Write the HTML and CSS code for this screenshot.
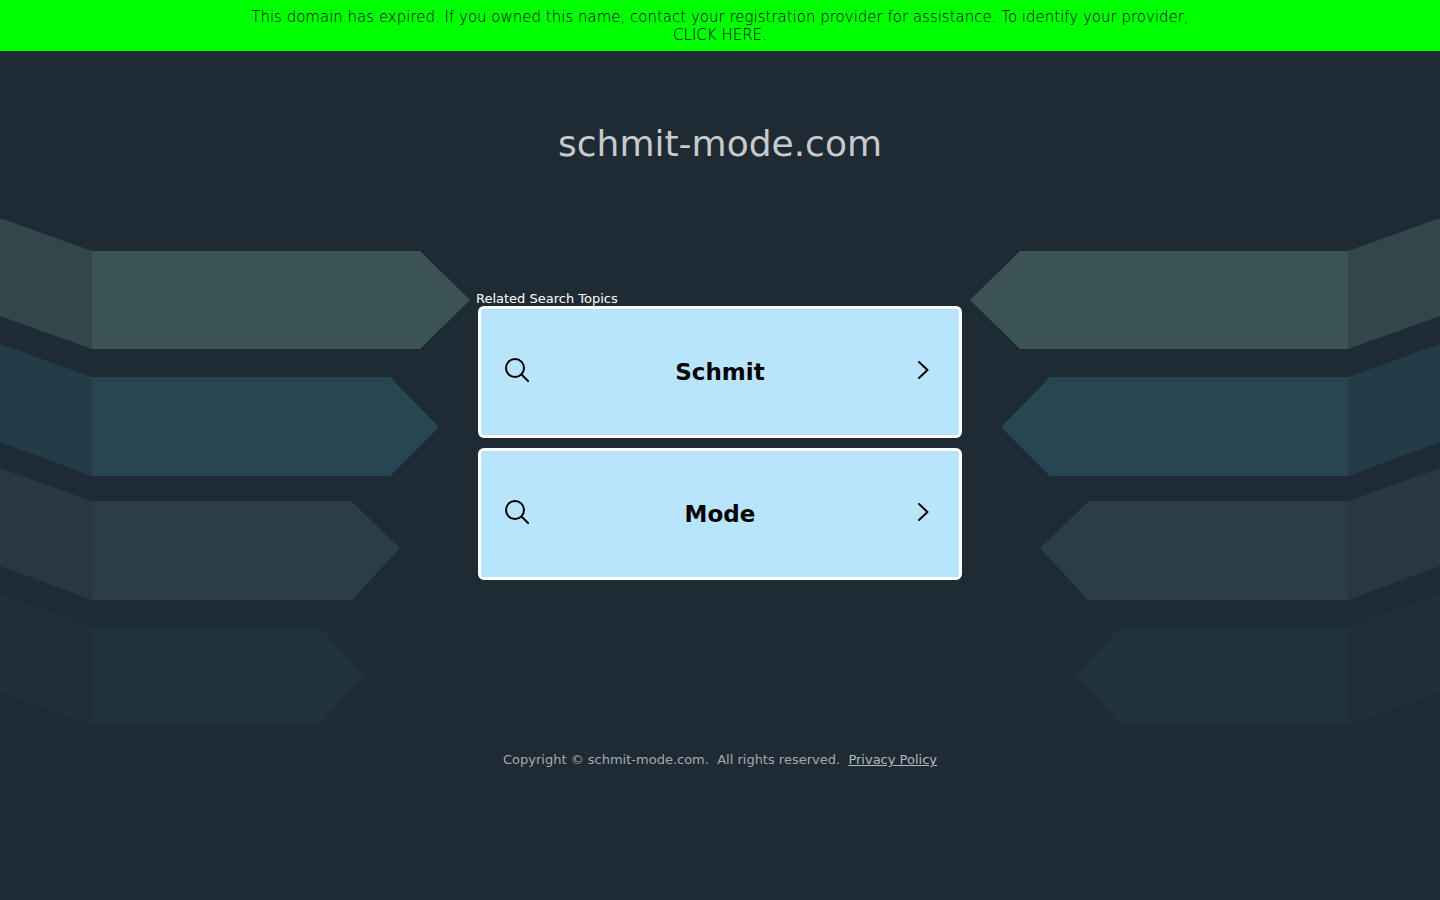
FILE: index.html
```html
<!DOCTYPE html>
<html lang="en">
<head>
  <meta charset="UTF-8">
  <meta name="viewport" content="width=device-width, initial-scale=1.0">
  <title>schmit-mode.com</title>
  <link rel="stylesheet" href="styles.css">
</head>
<body>
  <div class="banner">
    <p>This domain has expired. If you owned this name, contact your registration provider for assistance. To identify your provider, <a href="#">CLICK HERE.</a></p>
  </div>
  <main class="page">
    <svg class="arrows" viewBox="0 0 1440 520" aria-hidden="true">
      <defs>
        <g id="side">
          <path fill="#32464c" d="M0 1l92 33v98L0 99z"/>
          <path fill="#3c5356" d="M92 34h328l50 49-50 49H92z"/>
          <path fill="#243c48" d="M0 127l92 33v99L0 225z"/>
          <path fill="#284552" d="M92 160h298l49 50-49 49H92z"/>
          <path fill="#273840" d="M0 251l92 33v99L0 349z"/>
          <path fill="#2c3e45" d="M92 284h259l49 47-48 52H92z"/>
          <path fill="#1e2e3b" d="M0 377l92 33v98L0 475z"/>
          <path fill="#20323d" d="M92 410h227l46 48-46 50H92z"/>
        </g>
      </defs>
      <use href="#side"/>
      <use href="#side" transform="matrix(-1 0 0 1 1440 0)"/>
    </svg>
    <h1>schmit-mode.com</h1>
    <section class="topics">
      <h2>Related Search Topics</h2>
      <a class="topic" href="#">
        <svg class="icon" viewBox="0 0 24 24"><circle cx="10" cy="10" r="9"/><path d="M16.500 16.500l6.500 6.500"/></svg>
        <span>Schmit</span>
        <svg class="icon" viewBox="0 0 24 24"><path d="M8 4l8.500 8-8.500 8"/></svg>
      </a>
      <a class="topic" href="#">
        <svg class="icon" viewBox="0 0 24 24"><circle cx="10" cy="10" r="9"/><path d="M16.500 16.500l6.500 6.500"/></svg>
        <span>Mode</span>
        <svg class="icon" viewBox="0 0 24 24"><path d="M8 4l8.500 8-8.500 8"/></svg>
      </a>
    </section>
  </main>
  <footer>
    Copyright © schmit-mode.com.&nbsp; All rights reserved.&nbsp; <a href="#">Privacy Policy</a>
  </footer>
</body>
</html>
```
FILE: styles.css
```css
* {
  box-sizing: border-box;
}
body {
  margin: 0;
  min-height: 100vh;
  background: #1f2b34;
  font-family: "DejaVu Sans", sans-serif;
  color: #fff;
}
h1, h2, p {
  margin: 0;
  font-weight: normal;
}
.banner {
  padding: 8px 16px 7px;
  background: #0f0;
  color: #000;
  font-size: 15px;
  line-height: 18px;
  text-align: center;
}
.banner p {
  max-width: 960px;
  margin: 0 auto;
  font-family: "DejaVu Sans Light", "DejaVu Sans", sans-serif;
  font-weight: 200;
}
.banner a {
  color: inherit;
  text-decoration: none;
}
.page {
  position: relative;
  padding-top: 72px;
}
.arrows {
  position: absolute;
  z-index: -1;
  top: 166px;
  left: 0;
  width: 100%;
}
h1 {
  color: #c7cacd;
  font-size: 36px;
  line-height: 42px;
  text-align: center;
}
.topics {
  max-width: 484px;
  margin: 126px auto 0;
}
.topics h2 {
  margin-left: -2px;
  font-size: 13px;
  line-height: 15px;
}
.topic {
  display: flex;
  align-items: center;
  justify-content: space-between;
  height: 132px;
  margin-bottom: 10px;
  padding: 0 24px;
  border: 3px solid #fff;
  border-radius: 6px;
  background: #b8e5fc;
  color: #000;
  font-size: 23px;
  font-weight: bold;
  text-decoration: none;
}
.icon {
  width: 24px;
  height: 24px;
  margin-bottom: 4px;
  fill: none;
  stroke: #000;
  stroke-width: 2;
  stroke-linecap: round;
  stroke-linejoin: round;
}
footer {
  padding: 162px 16px 0;
  color: #a5aaae;
  font-size: 13px;
  line-height: 16px;
  text-align: center;
}
footer a {
  color: #b5babe;
}
```
